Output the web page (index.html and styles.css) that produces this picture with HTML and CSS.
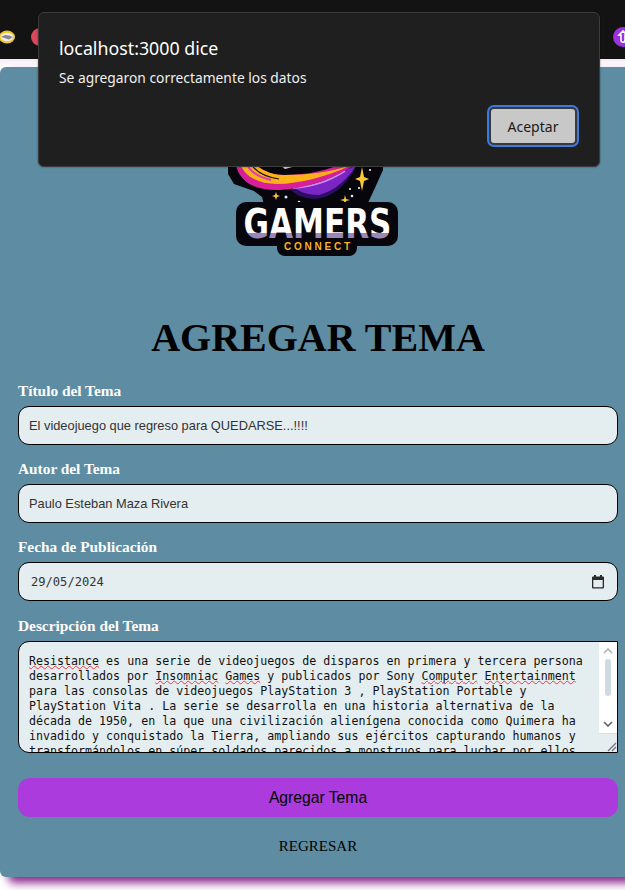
FILE: index.html
```html
<!DOCTYPE html>
<html lang="es">
<head>
<meta charset="utf-8">
<title>Agregar Tema</title>
<link rel="stylesheet" href="styles.css">
</head>
<body>
<header class="topbar">
  <svg class="ext" width="17" height="14" viewBox="0 0 17 14"><ellipse cx="8" cy="7" rx="8" ry="6.5" fill="#f2c81e"/><ellipse cx="8" cy="7" rx="6.5" ry="4.2" fill="#ececec"/><path d="M2 7l4-2 4 .5 4 1.5-4 2.5-3-1z" fill="#8a8a8a"/></svg>
  <span class="ext-red"></span>
  <span class="ext-purple"><svg width="14" height="16" viewBox="0 0 14 16"><path d="M7 2L3 6h2v5c0 3 4 3 4 0V6h2z" fill="none" stroke="#fff" stroke-width="1.6"/></svg></span>
</header>
<main class="card">
  <div class="logo-wrap">
    <svg class="logo" width="172" height="158" viewBox="228 100 172 158">
      <defs>
        <linearGradient id="gm" gradientUnits="userSpaceOnUse" x1="0" y1="208" x2="0" y2="238"><stop offset="0.82" stop-color="#ffffff"/><stop offset="0.82" stop-color="#9b86b8"/></linearGradient>
      </defs>
      <path d="M229 150H384V170L375 190L368 205H265L263 197L255 191L235 184L229 174Z" fill="#07060c"/>
      <path d="M288 186C310 184 340 174 360 160C352 180 336 198 316 199C302 198 294 194 288 186Z" fill="#2c0e63"/>
      <path d="M296 188C314 186 338 176 358 164C350 178 336 191 320 195C308 195 301 192 296 188Z" fill="#7a25c4"/>
      <path d="M294 188C314 187 332 180 346 171" fill="none" stroke="#c78be8" stroke-width="1.8"/>
      <path d="M236 160C238 178 250 190 277 190C300 190 335 180 356 164L352 160C330 170 310 175 285 175C270 175 258 168 254 160Z" fill="#d81f9a"/>
      <path d="M240 160C243 174 256 184 278 184C300 184 330 176 350 166C330 172 310 175 285 175C270 175 258 168 254 160Z" fill="#fbb117"/>
      <path d="M246 160C249 170 258 177 272 180" fill="none" stroke="#e13bb0" stroke-width="2"/>
      <path d="M252 164C257 172 266 177 280 179" fill="none" stroke="#141018" stroke-width="1.2"/>
      <path d="M280 164H304L286 169Z" fill="#f7c8e4"/>
      <path d="M363 167L365 177L370 179L365 181L363 191L361 181L356 179L361 177Z" fill="#ffc933"/>
      <path d="M277 192L278 195L281 196L278 197L277 200L276 197L273 196L276 195Z" fill="#ffc933"/>
      <path d="M346 195L347 199L351 200L347 201L346 205L345 201L341 200L345 199Z" fill="#ffc933"/>
      <circle cx="287" cy="197" r="1.5" fill="#dfe3f5"/><circle cx="300" cy="202" r="1.3" fill="#dfe3f5"/><circle cx="351" cy="189" r="1" fill="#fff"/><circle cx="353" cy="196" r="1.3" fill="#dfe3f5"/><circle cx="360" cy="188" r="1" fill="#fff"/><circle cx="371" cy="170" r="1" fill="#fff"/>
      <rect x="237" y="202" width="162" height="44" rx="10" fill="#07060c"/>
      <rect x="278" y="236" width="80" height="20" rx="8" fill="#07060c"/>
      <text class="logo-title" x="318.500" y="238" text-anchor="middle" textLength="148" lengthAdjust="spacingAndGlyphs" fill="url(#gm)">GAMERS</text>
      <text class="logo-sub" x="318" y="249.500" text-anchor="middle" textLength="66">CONNECT</text>
    </svg>
  </div>
  <h1 class="title">AGREGAR TEMA</h1>
  <form class="form">
    <label class="label">Título del Tema</label>
    <div class="field">El videojuego que regreso para QUEDARSE...!!!!</div>
    <label class="label">Autor del Tema</label>
    <div class="field">Paulo Esteban Maza Rivera</div>
    <label class="label">Fecha de Publicación</label>
    <div class="field field-date">
      <span>29/05/2024</span>
      <svg width="14" height="14" viewBox="0 0 14 14"><path d="M2 1.500h10a1 1 0 0 1 1 1v10a1 1 0 0 1-1 1H2a1 1 0 0 1-1-1v-10a1 1 0 0 1 1-1zM2.300 5v7.200h9.400V5z" fill="#2a2a2a" fill-rule="evenodd"/><rect x="3" y="0" width="2" height="2" fill="#2a2a2a"/><rect x="9" y="0" width="2" height="2" fill="#2a2a2a"/></svg>
    </div>
    <label class="label label-last">Descripción del Tema</label>
    <div class="area">
      <div class="area-text"><span class="sp">Resistance</span> es una serie de videojuegos de disparos en primera y tercera persona<br>desarrollados por <span class="sp">Insomniac</span> <span class="sp">Games</span> y publicados por Sony <span class="sp">Computer</span> <span class="sp">Entertainment</span><br>para las consolas de videojuegos PlayStation 3 , PlayStation Portable y<br>PlayStation Vita . La serie se desarrolla en una historia alternativa de la<br>década de 1950, en la que una civilización alienígena conocida como Quimera ha<br>invadido y conquistado la Tierra, ampliando sus ejércitos capturando humanos y<br>transformándolos en súper soldados parecidos a monstruos para luchar por ellos</div>
      <div class="scroll">
        <svg class="arrow" width="10" height="6" viewBox="0 0 10 6"><path d="M1 5l4-4 4 4" fill="none" stroke="#b0b0b0" stroke-width="1.6"/></svg>
        <span class="thumb"></span>
        <svg class="arrow" width="10" height="6" viewBox="0 0 10 6"><path d="M1 1l4 4 4-4" fill="none" stroke="#606060" stroke-width="1.6"/></svg>
        <span class="grip"><svg width="11" height="11" viewBox="0 0 11 11"><path d="M10 2L2 10M10 6L6 10" stroke="#777" stroke-width="1.4"/></svg></span>
      </div>
    </div>
    <button class="submit" type="button">Agregar Tema</button>
    <a class="back">REGRESAR</a>
  </form>
</main>
<div class="dialog">
  <div class="dialog-title">localhost:3000 dice</div>
  <div class="dialog-msg">Se agregaron correctamente los datos</div>
  <div class="dialog-actions"><button class="ok" type="button">Aceptar</button></div>
</div>
</body>
</html>
```
FILE: styles.css
```css
* { box-sizing: border-box; }
html, body { margin: 0; height: 890px; overflow: hidden; }
body {
  background: #fff;
  font-family: "Liberation Serif", serif;
}
.topbar {
  height: 59px;
  background: #131313;
  display: flex;
  align-items: center;
  padding: 15px 0 0 0;
  overflow: hidden;
}
.ext { margin-left: -1px; flex: none; }
.ext-red { width: 18px; height: 18px; border-radius: 50%; background: #d9485c; margin-left: 15px; flex: none; }
.ext-purple { width: 20px; height: 20px; border-radius: 50%; background: #9a32e0; margin-left: auto; margin-right: -8px; display: flex; align-items: center; justify-content: center; flex: none; }
.card {
  margin-top: 8px;
  height: 810px;
  background: #5d8ca3;
  border-radius: 6px 0 0 6px;
  box-shadow: 8px 6px 8px rgba(128, 20, 130, 0.9);
  padding: 0 7px 0 18px;
  position: relative;
}
body::before {
  content: "";
  position: absolute;
  left: 0; right: 0; top: 59px; height: 8px;
  background: linear-gradient(#f6e9f6, #fff);
}
.logo-wrap { display: flex; justify-content: center; padding-top: 33px; margin-left: -11px; }
.logo { display: block; }
.logo-title { font: 700 41px "DejaVu Sans", sans-serif; }
.logo-sub { font: 700 10px "Liberation Sans", sans-serif; fill: #fbb117; }
.title {
  margin: 57px 0 0;
  font-size: 40px;
  line-height: 46px;
  font-weight: 700;
  text-align: center;
  color: #000;
}
.form { display: flex; flex-direction: column; margin-top: 21px; }
.label {
  font-size: 15.35px;
  font-weight: 700;
  line-height: 18px;
  color: #fff;
  margin-bottom: 6px;
}
.label-last { margin-top: 1px; }
.field {
  height: 39px;
  border: 1.5px solid #000;
  border-radius: 11px;
  background: #e4edf0;
  font: 12.83px/37px "Liberation Sans", sans-serif;
  color: #333;
  padding: 0 10px;
  margin-bottom: 15px;
}
.field-date {
  display: flex;
  align-items: center;
  justify-content: space-between;
  font: 12.1px "DejaVu Sans Mono", monospace;
  padding: 0 12px;
}
.area {
  display: flex;
  height: 112px;
  border: 1.5px solid #000;
  border-radius: 11px 0 0 11px;
  background: #e4edf0;
  overflow: hidden;
}
.area-text {
  flex: 1;
  padding: 12px 0 0 10px;
  font: 11.65px/15px "DejaVu Sans Mono", monospace;
  color: #111;
  white-space: nowrap;
  overflow: hidden;
}
.sp {
  text-decoration: underline wavy #ee3a44 1.3px;
  text-decoration-skip-ink: none;
  text-underline-offset: 0;
}
.scroll {
  width: 18px;
  background: #fff;
  display: flex;
  flex-direction: column;
  align-items: center;
  padding-top: 6px;
  flex: none;
}
.arrow { display: block; flex: none; }
.thumb { width: 6px; height: 37px; background: #cfdae4; border-radius: 3px; margin: 5px 0 25px; flex: none; }
.grip { margin-top: 6px; width: 100%; height: 19px; background: #e4edf0; border-top: 1px solid #ddd; display: flex; align-items: flex-end; justify-content: flex-end; flex: none; }
.submit {
  margin-top: 25px;
  height: 39px;
  border: 0;
  border-radius: 12px;
  background: #ab3bdc;
  color: #000;
  font: 15.7px "Liberation Sans", sans-serif;
  padding: 0;
}
.back {
  margin-top: 20px;
  font-size: 15px;
  line-height: 18px;
  text-align: center;
  color: #000;
}
.dialog {
  position: absolute;
  left: 38px; top: 12px;
  width: 562px; height: 155px;
  background: #1f1f1f;
  border: 1px solid #3c3c3c;
  border-radius: 6px;
  color: #fff;
  padding: 24px 20px 0;
  font-family: "Noto Sans", sans-serif;
  box-shadow: 0 0 2px rgba(0,0,0,.5);
}
.dialog-title { font-size: 17.8px; line-height: 22px; }
.dialog-msg { font-size: 13.8px; line-height: 18px; margin-top: 10px; color: #f0f0f0; }
.dialog-actions { display: flex; justify-content: flex-end; margin-top: 20px; }
.ok {
  width: 88px; height: 38px;
  background: #c8c8c8;
  border: 2px solid #3a3a3a;
  outline: 2px solid #3b7ae0;
  border-radius: 5px;
  color: #1a1a1a;
  font: 14px "Noto Sans", sans-serif;
  margin-right: 2px;
  padding: 0;
}
```
